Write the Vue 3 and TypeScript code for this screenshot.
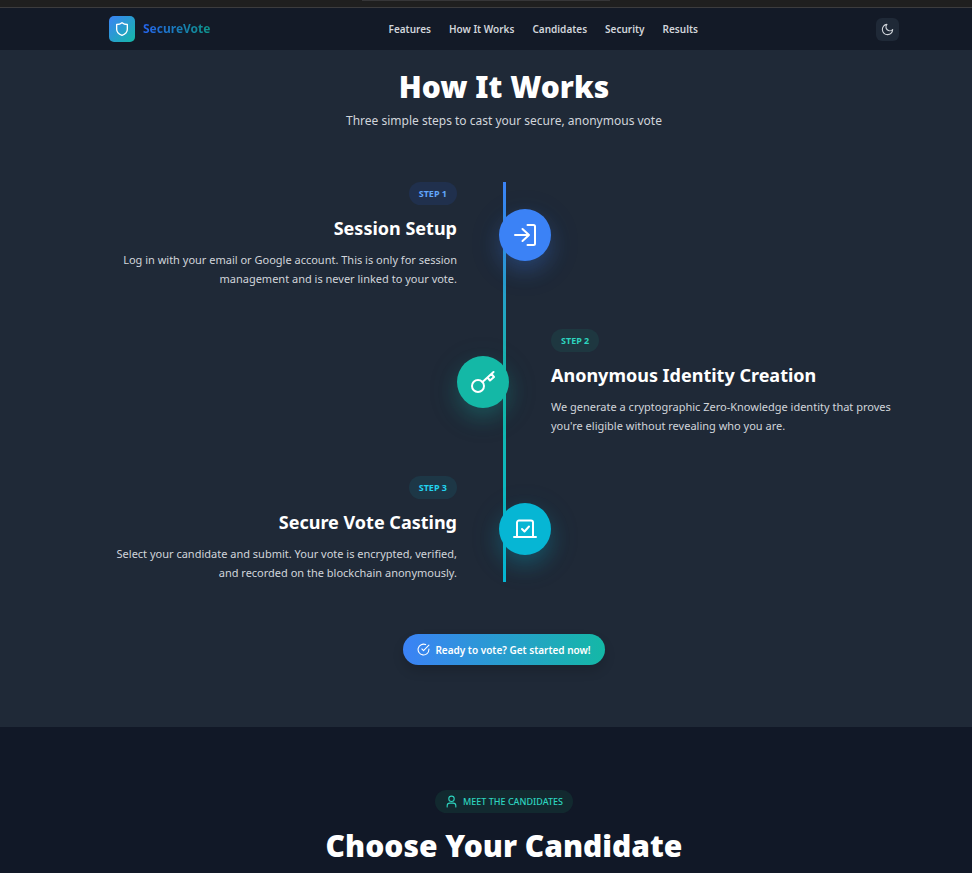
<script setup lang="ts">
interface Step {
  id: number
  title: string
  text: string
  tone: 'blue' | 'teal' | 'cyan'
  icon: 'login' | 'key' | 'vote'
}

const links: { label: string; href: string }[] = [
  { label: 'Features', href: '#features' },
  { label: 'How It Works', href: '#how-it-works' },
  { label: 'Candidates', href: '#candidates' },
  { label: 'Security', href: '#security' },
  { label: 'Results', href: '#results' },
]

const steps: Step[] = [
  {
    id: 1,
    title: 'Session Setup',
    text: 'Log in with your email or Google account. This is only for session management and is never linked to your vote.',
    tone: 'blue',
    icon: 'login',
  },
  {
    id: 2,
    title: 'Anonymous Identity Creation',
    text: "We generate a cryptographic Zero-Knowledge identity that proves you're eligible without revealing who you are.",
    tone: 'teal',
    icon: 'key',
  },
  {
    id: 3,
    title: 'Secure Vote Casting',
    text: 'Select your candidate and submit. Your vote is encrypted, verified, and recorded on the blockchain anonymously.',
    tone: 'cyan',
    icon: 'vote',
  },
]
</script>

<template>
  <div class="page">
    <div class="chrome"><span class="chrome-tab"></span></div>

    <header class="bar">
      <div class="container bar-inner">
        <a class="brand" href="#home">
          <span class="brand-mark">
            <svg viewBox="0 0 24 24" class="icon icon-shield" aria-hidden="true">
              <path d="M12 2.500c2.400 1.900 5 2.700 8 2.800v7.200c0 4.600-3.200 7.400-8 9-4.800-1.600-8-4.400-8-9V5.300c3-.1 5.600-.9 8-2.800z" />
            </svg>
          </span>
          <span class="brand-name">SecureVote</span>
        </a>
        <nav class="nav">
          <a v-for="link in links" :key="link.href" :href="link.href">{{ link.label }}</a>
        </nav>
        <button class="theme" type="button" aria-label="Toggle theme">
          <svg viewBox="0 0 24 24" class="icon icon-moon" aria-hidden="true">
            <path d="M11 2.500a6.500 6.500 0 0 0 10.500 9.500 9.500 9.500 0 1 1-10.500-9.500z" />
          </svg>
        </button>
      </div>
    </header>

    <section id="how-it-works" class="how">
      <div class="container">
        <h2 class="title">How It Works</h2>
        <p class="lead">Three simple steps to cast your secure, anonymous vote</p>

        <div class="timeline">
          <article
            v-for="step in steps"
            :key="step.id"
            class="step"
            :class="[step.tone, { flipped: step.id % 2 === 0 }]"
          >
            <div class="copy">
              <span class="badge">STEP {{ step.id }}</span>
              <h3>{{ step.title }}</h3>
              <p>{{ step.text }}</p>
            </div>
            <div class="node">
              <svg v-if="step.icon === 'login'" viewBox="0 0 24 24" class="icon" aria-hidden="true">
                <path d="M14.500 2h6a1.500 1.500 0 0 1 1.500 1.500v17a1.500 1.500 0 0 1-1.500 1.500h-6" />
                <path d="M2 12h14M9.500 6l6.500 6-6.500 6" />
              </svg>
              <svg v-else-if="step.icon === 'key'" viewBox="0 0 24 24" class="icon" aria-hidden="true">
                <circle cx="7" cy="16" r="6" />
                <path d="M11.500 12L22.500 2M16.500 7.500l2.500 3 4-3.500-2.500-3" />
              </svg>
              <svg v-else viewBox="0 0 24 24" class="icon" aria-hidden="true">
                <path d="M4 19.500V5.500a2 2 0 0 1 2-2h12a2 2 0 0 1 2 2v14M1 20h22M9 12l2.500 2.500 4.500-5" />
              </svg>
            </div>
          </article>
        </div>

        <div class="action">
          <button class="cta" type="button">
            <svg viewBox="0 0 24 24" class="icon icon-check" aria-hidden="true">
              <path d="M22 11v1a10 10 0 1 1-6-9.100M22 4L12 14l-3-3" />
            </svg>
            Ready to vote? Get started now!
          </button>
        </div>
      </div>
    </section>

    <section id="candidates" class="candidates">
      <div class="container">
        <span class="chip">
          <svg viewBox="0 0 24 24" class="icon icon-user" aria-hidden="true">
            <circle cx="12" cy="7" r="5" />
            <path d="M4 22v-2a5 5 0 0 1 5-5h6a5 5 0 0 1 5 5v2" />
          </svg>
          MEET THE CANDIDATES
        </span>
        <h2 class="title">Choose Your Candidate</h2>
      </div>
    </section>
  </div>
</template>

<style>
body {
  margin: 0;
  background: #111827;
}
</style>

<style scoped>
* {
  box-sizing: border-box;
}

.page {
  height: 100vh;
  overflow: hidden;
  font-family: 'Noto Sans', 'Open Sans', sans-serif;
  color: #fff;
}

.container {
  margin: 0 73px 0 109px;
}

.icon {
  display: block;
  width: 24px;
  height: 24px;
  fill: none;
  stroke: currentColor;
  stroke-width: 2;
  stroke-linecap: round;
  stroke-linejoin: round;
}

.chrome {
  display: flex;
  justify-content: center;
  height: 8px;
  background: #1f1f1f;
  border-bottom: 1px solid #3c3c3e;
}

.chrome-tab {
  width: 248px;
  height: 1px;
  background: #363638;
}

.bar {
  height: 42px;
  background: #131a27;
}

.bar-inner {
  display: flex;
  justify-content: space-between;
  align-items: center;
  height: 100%;
}

.brand {
  display: flex;
  align-items: center;
  gap: 8px;
  text-decoration: none;
}

.brand-mark {
  display: grid;
  place-items: center;
  width: 26px;
  height: 26px;
  border-radius: 5px;
  background: linear-gradient(135deg, #3b82f6, #14b8a6);
  color: #fff;
}

.icon-shield {
  width: 16px;
  height: 16px;
}

.brand-name {
  font-size: 12px;
  font-weight: 700;
  line-height: 20px;
  color: transparent;
  background: linear-gradient(90deg, #2563eb, #0d9488);
  background-clip: text;
}

.nav {
  display: flex;
  gap: 18px;
}

.nav a {
  font-size: 10px;
  font-weight: 600;
  line-height: 16px;
  color: #d1d5db;
  text-decoration: none;
}

.theme {
  display: grid;
  place-items: center;
  width: 23px;
  height: 23px;
  padding: 0;
  border: 0;
  border-radius: 6px;
  background: #1f2937;
  color: #d1d5db;
}

.icon-moon {
  width: 13px;
  height: 13px;
}

.how {
  padding: 17px 0 62px;
  background: #1f2937;
}

.title {
  margin: 0;
  font-size: 30px;
  font-weight: 900;
  line-height: 40px;
  text-align: center;
}

.lead {
  margin: 4px 0 0;
  font-size: 12px;
  line-height: 20px;
  text-align: center;
  color: #d1d5db;
}

.timeline {
  position: relative;
  display: grid;
  gap: 41px;
  margin-top: 51px;
}

.timeline::before {
  content: '';
  position: absolute;
  top: 0;
  bottom: 0;
  left: 50%;
  width: 3px;
  margin-left: -1px;
  background: linear-gradient(#3b82f6, #14b8a6 50%, #06b6d4);
}

.step {
  position: relative;
  display: grid;
  grid-template-columns: 1fr 42px 52px 1fr;
  align-items: center;
}

.copy {
  grid-column: 1;
  grid-row: 1;
  text-align: right;
}

.node {
  grid-column: 3;
  grid-row: 1;
  display: grid;
  place-items: center;
  height: 52px;
  border-radius: 50%;
  color: #fff;
}

.flipped {
  grid-template-columns: 1fr 52px 42px 1fr;
}

.flipped .copy {
  grid-column: 4;
  text-align: left;
}

.flipped .node {
  grid-column: 2;
}

.badge {
  display: inline-block;
  padding: 0 10px;
  border-radius: 12px;
  font-size: 9px;
  font-weight: 700;
  line-height: 23px;
  vertical-align: top;
}

.copy h3 {
  margin: 9px 0 8px;
  font-size: 18px;
  font-weight: 700;
  line-height: 28px;
}

.copy p {
  margin: 0;
  font-size: 11px;
  line-height: 19px;
  color: #d1d5db;
}

.blue .node {
  background: #3b82f6;
  box-shadow: 0 8px 40px rgba(59, 130, 246, 0.08), 0 10px 20px rgba(59, 130, 246, 0.24);
}

.teal .node {
  background: #14b8a6;
  box-shadow: 0 8px 40px rgba(20, 184, 166, 0.08), 0 10px 20px rgba(20, 184, 166, 0.24);
}

.cyan .node {
  background: #06b6d4;
  box-shadow: 0 8px 40px rgba(6, 182, 212, 0.08), 0 10px 20px rgba(6, 182, 212, 0.24);
}

.blue .badge {
  background: #20304d;
  color: #60a5fa;
}

.teal .badge {
  background: #1e3740;
  color: #2dd4bf;
}

.cyan .badge {
  background: #1d3746;
  color: #22d3ee;
}

.action {
  display: flex;
  justify-content: center;
  margin-top: 52px;
}

.cta {
  display: flex;
  align-items: center;
  gap: 5px;
  height: 31px;
  padding: 0 14px;
  border: 0;
  border-radius: 16px;
  background: linear-gradient(90deg, #3b82f6, #14b8a6);
  box-shadow: 0 6px 12px rgba(0, 0, 0, 0.14);
  color: #fff;
  font-family: inherit;
  font-size: 10px;
  font-weight: 600;
}

.icon-check {
  width: 13px;
  height: 13px;
}

.candidates {
  padding-top: 63px;
  text-align: center;
  background: #111827;
}

.chip {
  display: inline-flex;
  align-items: center;
  gap: 5px;
  height: 23px;
  padding: 0 10px;
  border-radius: 12px;
  background: #12292f;
  color: #2dd4bf;
  font-size: 9px;
  font-weight: 500;
  vertical-align: top;
}

.icon-user {
  width: 13px;
  height: 13px;
}

.candidates .title {
  margin-top: 13px;
}
</style>
